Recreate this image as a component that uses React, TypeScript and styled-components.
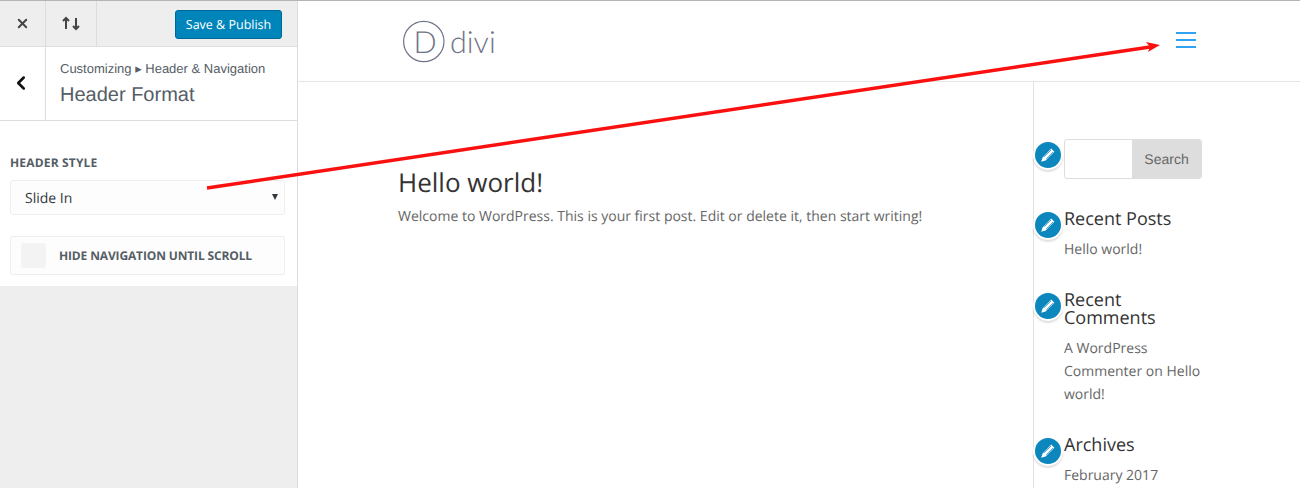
import React from 'react';
import styled, { createGlobalStyle } from 'styled-components';
import { X, ChevronLeft } from 'lucide-react';

const GlobalStyle = createGlobalStyle`
  html, body {
    margin: 0;
    padding: 0;
    height: 100%;
    overflow: hidden;
    background: #fff;
  }
  * {
    box-sizing: border-box;
  }
`;

const Page = styled.div`
  position: relative;
  display: flex;
  width: 1300px;
  height: 488px;
  border-top: 1px solid #b4b4b4;
  overflow: hidden;
  text-rendering: geometricPrecision;
`;

const Panel = styled.aside`
  display: flex;
  flex-direction: column;
  flex: 0 0 298px;
  background: #eeeeee;
  border-right: 1px solid #dddddd;
`;

const TopBar = styled.div`
  display: flex;
  align-items: stretch;
  height: 46px;
  border-bottom: 1px solid #dddddd;
`;

const BarButton = styled.div`
  display: flex;
  align-items: center;
  justify-content: center;
  width: ${p => p.$width}px;
  padding-right: ${p => p.$nudge || 0}px;
  border-right: 1px solid #dddddd;
  color: #444;
`;

const SaveSlot = styled.div`
  flex: 1;
  display: flex;
  justify-content: flex-end;
  padding: 9px 15px 0 0;
`;

const SaveButton = styled.div`
  display: flex;
  align-items: center;
  justify-content: center;
  width: 107px;
  height: 29px;
  background: #0085ba;
  border: 1px solid #006799;
  border-radius: 3px;
  color: #fff;
  font: 400 12.5px 'Open Sans', sans-serif;
`;

const TitleRow = styled.div`
  display: flex;
  height: 74px;
  background: #fff;
  border-bottom: 1px solid #dddddd;
`;

const BackButton = styled.div`
  display: flex;
  align-items: center;
  justify-content: center;
  width: 46px;
  padding: 0 4px 2px 0;
  border-right: 1px solid #dddddd;
  color: #111;
`;

const TitleText = styled.div`
  padding: 13px 0 0 14px;
  font-family: 'Liberation Sans', Arial, sans-serif;
  color: #555d66;
`;

const Crumb = styled.div`
  font-size: 13px;
  line-height: 18px;
`;

const Heading = styled.div`
  font-size: 20px;
  line-height: 26px;
  margin-top: 4px;
`;

const Controls = styled.div`
  height: 165px;
  padding: 33px 12px 0 10px;
  background: #fff;
`;

const Label = styled.div`
  font: 700 12px/17px 'Open Sans', sans-serif;
  letter-spacing: 0.17px;
  color: #555d66;
`;

const Select = styled.div`
  position: relative;
  height: 35px;
  margin-top: 9px;
  padding-left: 14px;
  background: #fdfdfd;
  border: 1px solid #eeeeee;
  border-radius: 3px;
  font: 400 14px/35px 'Open Sans', sans-serif;
  color: #32373c;
`;

const Caret = styled.span`
  position: absolute;
  right: 6px;
  top: 13px;
  width: 0;
  height: 0;
  border-left: 3px solid transparent;
  border-right: 3px solid transparent;
  border-top: 6px solid #32373c;
`;

const Toggle = styled.div`
  display: flex;
  align-items: center;
  gap: 13px;
  height: 39px;
  margin-top: 21px;
  padding-left: 10px;
  background: #fdfdfd;
  border: 1px solid #eeeeee;
  border-radius: 2px;
  font: 700 12px 'Open Sans', sans-serif;
  letter-spacing: -0.14px;
  color: #555d66;
`;

const Check = styled.span`
  width: 25px;
  height: 25px;
  background: #f3f3f3;
  border-radius: 3px;
`;

const Preview = styled.main`
  flex: 1;
  display: flex;
  flex-direction: column;
  font-family: 'Open Sans', sans-serif;
`;

const Header = styled.header`
  display: flex;
  align-items: center;
  justify-content: space-between;
  flex: 0 0 81px;
  padding: 0 104px 0 104px;
  border-bottom: 1px solid #e5e5e5;
`;

const Menu = styled.div`
  display: flex;
  flex-direction: column;
  gap: 5px;
  width: 20px;
  margin-bottom: 2px;
`;

const MenuBar = styled.span`
  height: 2px;
  background: #2ea3f2;
`;

const Body = styled.div`
  flex: 1;
  display: flex;
  padding-left: 100px;
`;

const Post = styled.article`
  flex: 0 0 635px;
  padding-top: 84px;
`;

const PostTitle = styled.h1`
  margin: 0;
  font-size: 26px;
  font-weight: 400;
  line-height: 33px;
  color: #333;
`;

const PostText = styled.p`
  margin: 6px 0 0;
  font-size: 14px;
  line-height: 24px;
  color: #666;
  white-space: nowrap;
`;

const Sidebar = styled.div`
  width: 170px;
  padding: 57px 0 0 30px;
  border-left: 1px solid #e2e2e2;
`;

const Widget = styled.section`
  position: relative;
  margin-bottom: 30px;
`;

const Badge = styled.span`
  position: absolute;
  left: -31px;
  top: ${p => p.$top}px;
  display: flex;
  align-items: center;
  justify-content: center;
  width: 30px;
  height: 30px;
  background: #0c87bd;
  border: 2px solid #fff;
  border-radius: 50%;
  box-shadow: 0 2px 2px rgba(0, 0, 0, 0.13);
`;

const SearchForm = styled.div`
  display: flex;
  width: 138px;
  height: 40px;
  margin-bottom: 31px;
  border: 1px solid #dddddd;
  border-radius: 3px;
  overflow: hidden;
`;

const SearchField = styled.div`
  flex: 1;
`;

const SearchButton = styled.div`
  display: flex;
  align-items: center;
  justify-content: center;
  width: 69px;
  background: #dddddd;
  font: 400 14px 'Liberation Sans', Arial, sans-serif;
  color: #666;
`;

const WidgetTitle = styled.h4`
  margin: 0;
  font-size: 18px;
  font-weight: 400;
  line-height: 18px;
  color: #333;
`;

const WidgetText = styled.div`
  margin-top: 10px;
  font-size: 14px;
  line-height: 23px;
  color: #666;
`;

const ArrowOverlay = styled.svg`
  position: absolute;
  left: 0;
  top: -1px;
  pointer-events: none;
`;

const LogoSvg = styled.svg`
  margin-top: 2px;
`;

const LogoText = styled.text`
  font-family: Lato, sans-serif;
  font-weight: 300;
  fill: #6f7386;
`;

const Pencil = () => (
  <svg width="18" height="18" viewBox="0 0 18 18">
    <path d="M12.2 2.6 15.4 5.8 6.6 14.4 2.2 15.8 3.6 11.4Z" fill="#fff" />
    <path d="M5.2 10.6 12 3.9M7.4 12.8 14.2 6" stroke="#0c87bd" strokeWidth="0.8" />
  </svg>
);

const SortArrows = () => (
  <svg width="18" height="15" viewBox="0 0 18 15" fill="none" stroke="#444" strokeWidth="2">
    <path d="M4 13V1.5M1 5 4 2 7 5" />
    <path d="M14 2V13.5M11 10 14 13 17 10" />
  </svg>
);

const Logo = () => (
  <LogoSvg width="94" height="44" viewBox="0 0 94 44">
    <circle cx="21.8" cy="21.5" r="20.2" fill="none" stroke="#6f7386" strokeWidth="1.2" />
    <LogoText x="23" y="32.5" fontSize="30.5" textAnchor="middle">D</LogoText>
    <LogoText x="48" y="32.5" fontSize="30.5">divi</LogoText>
  </LogoSvg>
);

const App = () => {
  return (
    <Page>
      <GlobalStyle />
      <Panel>
        <TopBar>
          <BarButton $width={46} $nudge={1}>
            <X size={15} strokeWidth={3} />
          </BarButton>
          <BarButton $width={51}>
            <SortArrows />
          </BarButton>
          <SaveSlot>
            <SaveButton>Save &amp; Publish</SaveButton>
          </SaveSlot>
        </TopBar>
        <TitleRow>
          <BackButton>
            <ChevronLeft size={22} strokeWidth={2.8} />
          </BackButton>
          <TitleText>
            <Crumb>Customizing ▸ Header &amp; Navigation</Crumb>
            <Heading>Header Format</Heading>
          </TitleText>
        </TitleRow>
        <Controls>
          <Label>HEADER STYLE</Label>
          <Select>
            Slide In
            <Caret />
          </Select>
          <Toggle>
            <Check />
            HIDE NAVIGATION UNTIL SCROLL
          </Toggle>
        </Controls>
      </Panel>
      <Preview>
        <Header>
          <Logo />
          <Menu>
            <MenuBar />
            <MenuBar />
            <MenuBar />
          </Menu>
        </Header>
        <Body>
          <Post>
            <PostTitle>Hello world!</PostTitle>
            <PostText>Welcome to WordPress. This is your first post. Edit or delete it, then start writing!</PostText>
          </Post>
          <Sidebar>
            <Widget>
              <Badge $top={1}><Pencil /></Badge>
              <SearchForm>
                <SearchField />
                <SearchButton>Search</SearchButton>
              </SearchForm>
            </Widget>
            <Widget>
              <Badge $top={0}><Pencil /></Badge>
              <WidgetTitle>Recent Posts</WidgetTitle>
              <WidgetText>Hello world!</WidgetText>
            </Widget>
            <Widget>
              <Badge $top={0}><Pencil /></Badge>
              <WidgetTitle>Recent Comments</WidgetTitle>
              <WidgetText>A WordPress Commenter on Hello world!</WidgetText>
            </Widget>
            <Widget>
              <Badge $top={0}><Pencil /></Badge>
              <WidgetTitle>Archives</WidgetTitle>
              <WidgetText>February 2017</WidgetText>
            </Widget>
          </Sidebar>
        </Body>
      </Preview>
      <ArrowOverlay width="1300" height="488">
        <line x1="207" y1="188" x2="1150" y2="47" stroke="#fb1010" strokeWidth="3.4" />
        <path d="M1160 45 1146 42 1150 47 1148 52Z" fill="#fb1010" />
      </ArrowOverlay>
    </Page>
  );
};

export default App;
